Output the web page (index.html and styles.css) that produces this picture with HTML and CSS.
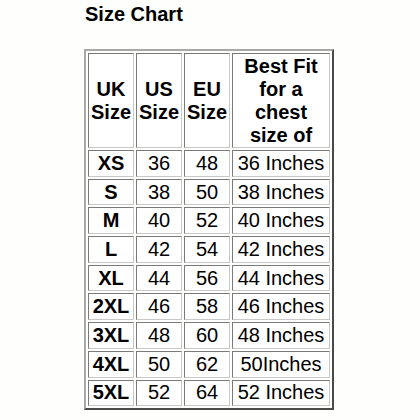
FILE: index.html
```html
<!DOCTYPE html>
<html>
<head>
<meta charset="utf-8">
<link rel="stylesheet" href="styles.css">
</head>
<body>
<div class="page">
  <h1 class="title">Size Chart</h1>
  <table class="chart">
    <colgroup>
      <col class="c-uk"><col class="c-us"><col class="c-eu"><col class="c-fit">
    </colgroup>
    <tr class="head">
      <th>UK<br>Size</th>
      <th>US<br>Size</th>
      <th>EU<br>Size</th>
      <th>Best Fit<br>for a<br>chest<br>size of</th>
    </tr>
    <tr><th>XS</th><td>36</td><td>48</td><td>36 Inches</td></tr>
    <tr><th>S</th><td>38</td><td>50</td><td>38 Inches</td></tr>
    <tr><th>M</th><td>40</td><td>52</td><td>40 Inches</td></tr>
    <tr><th>L</th><td>42</td><td>54</td><td>42 Inches</td></tr>
    <tr><th>XL</th><td>44</td><td>56</td><td>44 Inches</td></tr>
    <tr><th>2XL</th><td>46</td><td>58</td><td>46 Inches</td></tr>
    <tr><th>3XL</th><td>48</td><td>60</td><td>48 Inches</td></tr>
    <tr><th>4XL</th><td>50</td><td>62</td><td>50Inches</td></tr>
    <tr><th>5XL</th><td>52</td><td>64</td><td>52 Inches</td></tr>
  </table>
</div>
</body>
</html>
```

FILE: styles.css
```css
html, body {
  margin: 0;
  padding: 0;
  background: #fefefc;
}
body {
  font-family: "Liberation Sans", Arial, sans-serif;
  color: #000;
  width: 420px;
  height: 420px;
  overflow: hidden;
}
.page {
  padding: 3px 0 0 84px;
}
.title {
  margin: 0 0 0 1px;
  font-size: 20px;
  line-height: 23px;
  font-weight: bold;
  color: #000;
}
.chart {
  margin-top: 23px;
  border-collapse: separate;
  border-spacing: 2px;
  border: 2px solid;
  border-color: #a8a8a8 #4a4a4a #4a4a4a #a8a8a8;
  table-layout: fixed;
  width: 250px;
  font-size: 20px;
  line-height: 23px;
}
.c-uk, .c-us, .c-eu { width: 46px; }
.c-fit { width: 98px; }
.chart th, .chart td {
  background: #fff;
  color: #000;
  border: 1px solid;
  border-color: #7a7a7a #c8c8c8 #c8c8c8 #7a7a7a;
  padding: 0;
  text-align: center;
  vertical-align: middle;
  height: 24.7px;
  white-space: nowrap;
}
.chart th { font-weight: bold; }
.chart td { font-weight: normal; }
.chart .head th {
  height: 93px;
}
```
